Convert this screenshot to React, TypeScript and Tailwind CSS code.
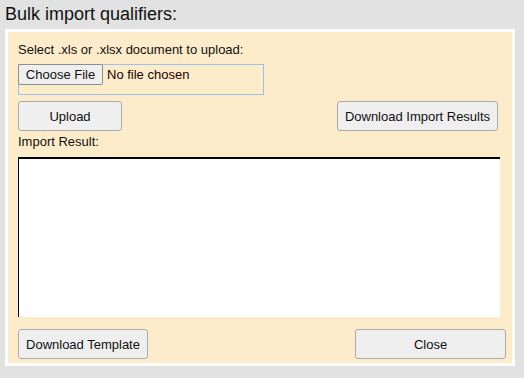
import React from "react";

const btn =
  "h-[30px] rounded-[3px] border border-[#ababab] bg-[#efefef] text-[13px] leading-[15px] text-[#111] flex items-center justify-center";

export default function App() {
  return (
    <div
      className="w-[524px] h-[378px] bg-[#e2e2e2] overflow-hidden"
      style={{ fontFamily: '"Liberation Sans", Arial, sans-serif' }}
    >
      <div className="pt-[4px] pl-[5px] text-[18px] leading-[21px] text-[#111]">
        Bulk import qualifiers:
      </div>
      <div className="mt-[4px] ml-[5px] w-[510px] h-[337px] border-[3px] border-white bg-[#fdecca] flex flex-col pl-[10px] pt-[10px]">
        <div className="text-[13px] leading-[15px] text-[#111]">
          Select .xls or .xlsx document to upload:
        </div>
        <div className="mt-[7px] w-[246px] h-[31px] border border-[#9ebfe9] relative">
          <div className="absolute left-[-1px] top-[-1px] flex items-center">
            <div className="h-[21px] w-[85px] rounded-[2px] border border-[#8f8f8f] bg-[#efefef] text-[13px] leading-[15px] text-[#111] flex items-center justify-center">
              Choose File
            </div>
            <span className="ml-[4px] text-[13px] leading-[15px] text-[#220000]">
              No file chosen
            </span>
          </div>
        </div>
        <div className="mt-[6px] flex justify-between pr-[14px]">
          <div className={`${btn} w-[104px]`}>Upload</div>
          <div className={`${btn} w-[161px]`}>Download Import Results</div>
        </div>
        <div className="mt-[3px] text-[13px] leading-[15px] text-[#111]">
          Import Result:
        </div>
        <div className="mt-[8px] w-[482px] h-[160px] bg-white border-t-2 border-l border-black" />
        <div className="mt-[12px] flex justify-between pr-[6px]">
          <div className={`${btn} w-[130px]`}>Download Template</div>
          <div className={`${btn} w-[151px]`}>Close</div>
        </div>
      </div>
    </div>
  );
}
